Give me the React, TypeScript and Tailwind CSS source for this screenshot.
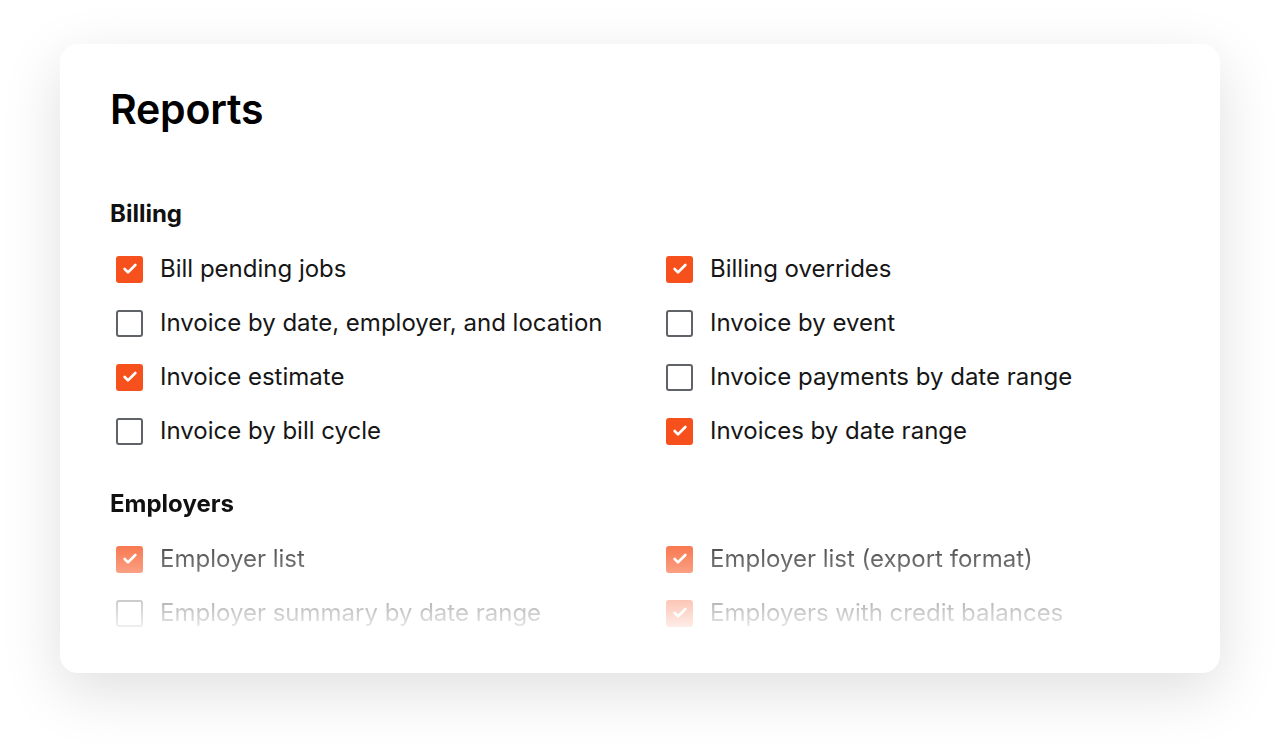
import { Check } from "lucide-react";

type Item = { label: string; checked: boolean };

const billing: Item[] = [
  { label: "Bill pending jobs", checked: true },
  { label: "Billing overrides", checked: true },
  { label: "Invoice by date, employer, and location", checked: false },
  { label: "Invoice by event", checked: false },
  { label: "Invoice estimate", checked: true },
  { label: "Invoice payments by date range", checked: false },
  { label: "Invoice by bill cycle", checked: false },
  { label: "Invoices by date range", checked: true },
];

const employers: Item[] = [
  { label: "Employer list", checked: true },
  { label: "Employer list (export format)", checked: true },
  { label: "Employer summary by date range", checked: false },
  { label: "Employers with credit balances", checked: true },
];

function Row({ item }: { item: Item }) {
  return (
    <label className="flex items-center h-[30px] gap-[17px] pl-[6px]">
      {item.checked ? (
        <span className="w-[27px] h-[27px] rounded-[3px] bg-[#f6511d] flex items-center justify-center flex-shrink-0">
          <Check size={16} strokeWidth={4} className="text-white" />
        </span>
      ) : (
        <span className="w-[27px] h-[27px] rounded-[3px] border-2 border-[#5f6267] bg-white flex-shrink-0" />
      )}
      <span className="text-[24px] text-[#161616] leading-none">{item.label}</span>
    </label>
  );
}

function Section({ title, items }: { title: string; items: Item[] }) {
  return (
    <div>
      <h2 className="text-[24px] leading-[28px] font-bold text-[#111]">{title}</h2>
      <div className="grid grid-cols-2 gap-x-10 gap-y-6 mt-[26px]">
        {items.map((it) => (
          <Row key={it.label} item={it} />
        ))}
      </div>
    </div>
  );
}

export default function App() {
  return (
    <div className="w-[1280px] h-[750px] bg-white pt-[44px] px-[60px] font-['Inter',sans-serif]">
      <div className="h-[629px] bg-white rounded-[18px] shadow-[0_18px_60px_rgba(0,0,0,0.13)] pt-[41px] px-[50px] overflow-hidden">
        <h1 className="text-[41px] leading-[48px] font-semibold text-black tracking-[-0.2px]">Reports</h1>
        <div className="mt-[67px]">
          <Section title="Billing" items={billing} />
        </div>
        <div className="mt-[44px] [mask-image:linear-gradient(to_bottom,black_28px,transparent_150px)] [-webkit-mask-image:linear-gradient(to_bottom,black_28px,transparent_150px)]">
          <Section title="Employers" items={employers} />
        </div>
      </div>
    </div>
  );
}
